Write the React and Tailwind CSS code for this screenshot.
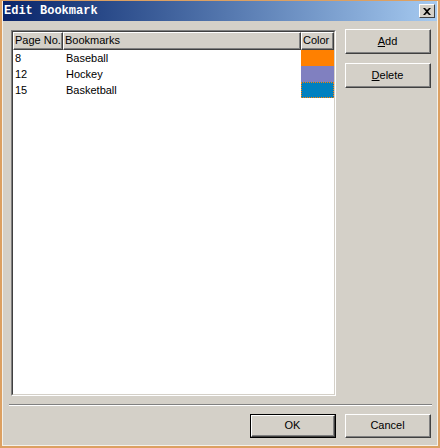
import React from "react";

const rows = [
  { page: "8", name: "Baseball", color: "bg-[#ff8000]" },
  { page: "12", name: "Hockey", color: "bg-[#8080c0]" },
  { page: "15", name: "Basketball", color: "bg-[#0080c0]", focus: true },
];

function Btn({ children, isDefault }) {
  // classic 3d button, default one gets the black frame
  return (
    <div className={`h-full ${isDefault ? "border border-black" : ""}`}>
      <div className="h-full border-t border-l border-white border-r border-b border-r-[#404040] border-b-[#404040]">
        <div className="border-r border-b border-r-[#808080] border-b-[#808080] flex items-center justify-center h-full">
          {children}
        </div>
      </div>
    </div>
  );
}

function HeadCell({ w, children }) {
  return (
    <div className={`${w} h-[18px] border-t border-l border-white border-r border-b border-r-[#404040] border-b-[#404040]`}>
      <div className="h-full border-r border-b border-r-[#808080] border-b-[#808080] flex items-center pl-[1px] whitespace-nowrap overflow-hidden">
        {children}
      </div>
    </div>
  );
}

export default function App() {
  return (
    <div
      className="w-[440px] h-[448px] bg-[#d4d0c8] border-l-2 border-r-2 border-b-2 border-t border-[#dca062] text-[11px] text-black"
      style={{ fontFamily: '"Liberation Sans", Arial, sans-serif' }}
    >
      <div className="h-full flex flex-col border-l border-r border-b border-[#f4f1ea]">
        {/* title bar */}
        <div className="h-[20px] flex items-center justify-between pl-[1px] pr-[2px] bg-gradient-to-r from-[#0a246a] to-[#a6caf0]">
          <span
            className="text-white font-bold text-[12px] leading-none"
            style={{ fontFamily: '"Liberation Mono", "Courier New", monospace' }}
          >
            Edit Bookmark
          </span>
          <div className="w-[16px] h-[14px] bg-[#d4d0c8] border-t border-l border-white border-r border-b border-r-[#404040] border-b-[#404040] flex items-center justify-center">
            <svg width="8" height="7" viewBox="0 0 8 7">
              <path d="M0 0h2l2 2 2-2h2L5 3.5 8 7H6L4 5 2 7H0l3-3.5z" fill="#000" />
            </svg>
          </div>
        </div>

        {/* client area */}
        <div className="flex-1 flex flex-col pl-[6px] pr-[5px] pt-[9px]">
          <div className="flex">
            <div className="ml-[2px] w-[325px] h-[366px] border-t border-l border-[#808080] border-r border-b border-r-white border-b-white">
              <div className="h-full bg-white border-t border-l border-[#404040] border-r border-b border-r-[#d4d0c8] border-b-[#d4d0c8]">
                <div className="flex bg-[#d4d0c8]">
                  <HeadCell w="w-[50px]">Page No.</HeadCell>
                  <HeadCell w="w-[238px]">Bookmarks</HeadCell>
                  <HeadCell w="w-[33px]">Color</HeadCell>
                </div>
                {rows.map((r) => (
                  <div key={r.page} className="flex h-[16px] items-center">
                    <div className="w-[50px] pl-[2px]">{r.page}</div>
                    <div className="w-[238px] pl-[3px]">{r.name}</div>
                    <div
                      className={`w-[33px] h-full ${r.color} ${
                        r.focus ? "border border-dotted border-[#ff8000]" : ""
                      }`}
                    />
                  </div>
                ))}
              </div>
            </div>

            <div className="ml-[9px] mt-[-1px] flex flex-col gap-[9px] w-[86px]">
              <div className="h-[25px]">
                <Btn>
                  <span>
                    <u>A</u>dd
                  </span>
                </Btn>
              </div>
              <div className="h-[25px]">
                <Btn>
                  <span>
                    <u>D</u>elete
                  </span>
                </Btn>
              </div>
            </div>
          </div>

          <div className="mt-[8px] w-[423px] border-t border-[#808080] border-b border-b-white" />

          <div className="mt-[8px] flex justify-end gap-[9px] pr-[1px]">
            <div className="w-[86px] h-[24px]">
              <Btn isDefault>OK</Btn>
            </div>
            <div className="w-[86px] h-[24px]">
              <Btn>Cancel</Btn>
            </div>
          </div>
        </div>
      </div>
    </div>
  );
}
